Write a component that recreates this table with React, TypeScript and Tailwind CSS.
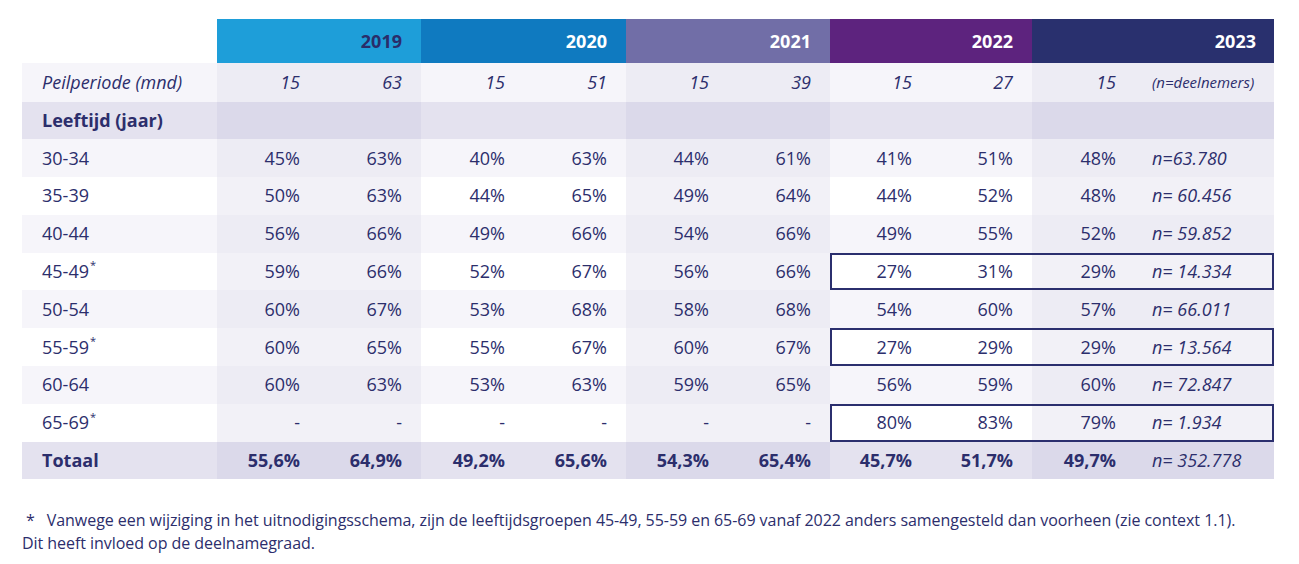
import React from "react";

type Row = {
  label: string;
  star?: boolean;
  values: string[];
  n: string;
  tone: "light" | "white" | "dark";
  boxed?: boolean;
  bold?: boolean;
};

const widths = ["w-[102px]", "w-[102px]", "w-[103px]", "w-[102px]", "w-[102px]", "w-[102px]", "w-[101px]", "w-[101px]", "w-[103px]"];
// which value columns belong to a shaded year group (2019, 2021, 2023)
const shaded = [true, true, false, false, true, true, false, false, true];

const rowBg = { light: "bg-[#f6f5fa]", white: "bg-white", dark: "bg-[#e4e2ef]" };
const shadeBg = { light: "bg-[#edecf4]", white: "bg-[#f2f1f7]", dark: "bg-[#dbd9ea]" };

const rows: Row[] = [
  { label: "30-34", values: ["45%", "63%", "40%", "63%", "44%", "61%", "41%", "51%", "48%"], n: "n=63.780", tone: "light" },
  { label: "35-39", values: ["50%", "63%", "44%", "65%", "49%", "64%", "44%", "52%", "48%"], n: "n= 60.456", tone: "white" },
  { label: "40-44", values: ["56%", "66%", "49%", "66%", "54%", "66%", "49%", "55%", "52%"], n: "n= 59.852", tone: "light" },
  { label: "45-49", star: true, values: ["59%", "66%", "52%", "67%", "56%", "66%", "27%", "31%", "29%"], n: "n= 14.334", tone: "white", boxed: true },
  { label: "50-54", values: ["60%", "67%", "53%", "68%", "58%", "68%", "54%", "60%", "57%"], n: "n= 66.011", tone: "light" },
  { label: "55-59", star: true, values: ["60%", "65%", "55%", "67%", "60%", "67%", "27%", "29%", "29%"], n: "n= 13.564", tone: "white", boxed: true },
  { label: "60-64", values: ["60%", "63%", "53%", "63%", "59%", "65%", "56%", "59%", "60%"], n: "n= 72.847", tone: "light" },
  { label: "65-69", star: true, values: ["-", "-", "-", "-", "-", "-", "80%", "83%", "79%"], n: "n= 1.934", tone: "white", boxed: true },
  { label: "Totaal", bold: true, values: ["55,6%", "64,9%", "49,2%", "65,6%", "54,3%", "65,4%", "45,7%", "51,7%", "49,7%"], n: "n= 352.778", tone: "dark" },
];

const years = [
  { year: "2019", w: "w-[204px]", bg: "bg-[#1e9ed9]", text: "text-[#2a2d6a]" },
  { year: "2020", w: "w-[205px]", bg: "bg-[#0f7ac0]", text: "text-white" },
  { year: "2021", w: "w-[204px]", bg: "bg-[#716ea7]", text: "text-white" },
  { year: "2022", w: "w-[202px]", bg: "bg-[#5d237e]", text: "text-white" },
  { year: "2023", w: "w-[242px]", bg: "bg-[#29306e]", text: "text-white" },
];

function Cells({ values, tone, bold }: { values: string[]; tone: Row["tone"]; bold?: boolean }) {
  return (
    <>
      {values.map((v, i) => (
        <div
          key={i}
          className={`${widths[i]} ${shaded[i] ? shadeBg[tone] : rowBg[tone]} flex items-center justify-end pr-[19px] ${bold ? "font-bold" : ""}`}
        >
          {v}
        </div>
      ))}
    </>
  );
}

export default function App() {
  return (
    <div className="min-h-[564px] bg-white pt-[19px] pl-[22px] text-[18px] text-[#2c2e6c]" style={{ fontFamily: '"Open Sans", sans-serif' }}>
      <div className="w-[1252px]">
        {/* year header */}
        <div className="flex h-[44px]">
          <div className="w-[195px]" />
          {years.map((y) => (
            <div key={y.year} className={`${y.w} ${y.bg} ${y.text} flex items-center justify-end font-bold ${y.year === "2023" ? "pr-[18px]" : "pr-[19px]"}`}>
              {y.year}
            </div>
          ))}
        </div>

        {/* Peilperiode */}
        <div className="flex h-[38.5px] italic">
          <div className="flex w-[195px] items-center bg-[#f6f5fa] pl-[20px]">Peilperiode (mnd)</div>
          <Cells values={["15", "63", "15", "51", "15", "39", "15", "27", "15"]} tone="light" />
          <div className="flex w-[139px] items-center bg-[#edecf4] pl-[17px] text-[15px]">(n=deelnemers)</div>
        </div>

        {/* Leeftijd */}
        <div className="flex h-[37.8px]">
          <div className="flex w-[195px] items-center bg-[#e4e2ef] pl-[20px] font-bold">Leeftijd (jaar)</div>
          <Cells values={["", "", "", "", "", "", "", "", ""]} tone="dark" />
          <div className="w-[139px] bg-[#dbd9ea]" />
        </div>

        {rows.map((r) => (
          <div key={r.label} className="relative flex h-[37.8px]">
            <div className={`flex w-[195px] items-center ${rowBg[r.tone]} pl-[20px] ${r.bold ? "font-bold" : ""}`}>
              {r.label}
              {r.star && <span className="relative -top-[6px] ml-[1px] text-[11px]">*</span>}
            </div>
            <Cells values={r.values} tone={r.tone} bold={r.bold} />
            <div className={`flex w-[139px] items-center ${shadeBg[r.tone]} pl-[17px] italic`}>{r.n}</div>
            {r.boxed && (
              <div className="pointer-events-none absolute top-0 bottom-0 left-[808px] right-0 border-2 border-[#2b2f6e]" />
            )}
          </div>
        ))}
      </div>

      {/* footnote */}
      <div className="mt-[30px] text-[16px] leading-[23px] tracking-[-0.05px]">
        <p>
          <span className="mr-[12px] ml-[4px]">*</span>
          Vanwege een wijziging in het uitnodigingsschema, zijn de leeftijdsgroepen 45-49, 55-59 en 65-69 vanaf 2022 anders samengesteld dan voorheen (zie context 1.1).
        </p>
        <p>Dit heeft invloed op de deelnamegraad.</p>
      </div>
    </div>
  );
}
